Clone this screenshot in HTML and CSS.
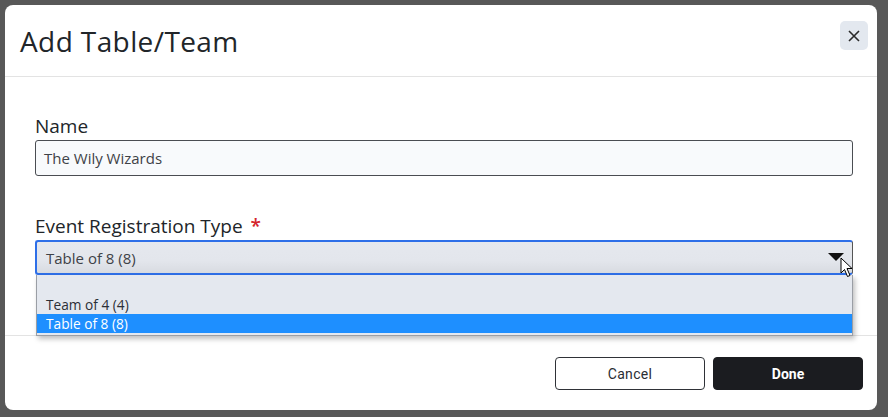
FILE: index.html
```html
<!DOCTYPE html>
<html>
<head>
<meta charset="utf-8">
<link rel="stylesheet" href="styles.css">
</head>
<body>
<div class="modal">
  <div class="modal-header">
    <h1 class="modal-title">Add Table/Team</h1>
    <button class="close-btn" aria-label="Close">
      <svg width="12" height="12" viewBox="0 0 12 12"><path d="M1 1L11 11M11 1L1 11" stroke="#2a2a2a" stroke-width="1.6" fill="none"/></svg>
    </button>
  </div>
  <div class="modal-body">
    <div class="field">
      <label class="label">Name</label>
      <div class="input">The Wily Wizards</div>
    </div>
    <div class="field field-select">
      <label class="label">Event Registration Type <span class="req">*</span></label>
      <div class="select">
        <span>Table of 8 (8)</span>
        <svg class="caret" width="16" height="8" viewBox="0 0 16 8"><path d="M0 0H16L8 8Z" fill="#111"/></svg>
      </div>
      <ul class="dropdown">
        <li class="opt opt-empty"></li>
        <li class="opt">Team of 4 (4)</li>
        <li class="opt opt-active">Table of 8 (8)</li>
      </ul>
      <svg class="cursor" width="14" height="21" viewBox="0 0 14 21"><path d="M1 1V16L4.5 12.5L7.5 19.5L10 18.5L7 11.5H12Z" fill="#fff" stroke="#000" stroke-width="1"/></svg>
    </div>
  </div>
  <div class="modal-footer">
    <button class="btn btn-cancel">Cancel</button>
    <button class="btn btn-done">Done</button>
  </div>
</div>
</body>
</html>
```

FILE: styles.css
```css
* { box-sizing: border-box; }
html, body { margin: 0; padding: 0; }
body {
  width: 888px;
  height: 417px;
  background: #585858;
  font-family: "Open Sans", "Noto Sans", sans-serif;
  overflow: hidden;
  padding: 5px 11px 7px 5px;
}
.modal {
  width: 872px;
  height: 405px;
  background: #fff;
  border-radius: 8px;
  display: flex;
  flex-direction: column;
}
.modal-header {
  height: 72px;
  border-bottom: 1px solid #e3e3e3;
  display: flex;
  align-items: flex-start;
  justify-content: space-between;
  padding: 16px 9px 0 15px;
  flex: none;
}
.modal-title {
  margin: 0;
  font-size: 28px;
  font-weight: 400;
  color: #212529;
  line-height: 40px;
  letter-spacing: 0.4px;
}
.close-btn {
  width: 28px;
  height: 29px;
  border: none;
  border-radius: 5px;
  background: #e3e8ef;
  display: flex;
  align-items: center;
  justify-content: center;
  padding: 0;
}
.modal-body {
  flex: 1;
  padding: 37px 24px 0 30px;
  border-bottom: 1px solid #e3e3e3;
}
.field { display: flex; flex-direction: column; }
.field-select { position: relative; margin-top: 38px; }
.label {
  font-size: 19px;
  font-weight: 500;
  color: #212529;
  line-height: 24px;
  margin-bottom: 2px;
}
.req { color: #d4242c; font-weight: 600; margin-left: 3px; }
.input {
  height: 36px;
  border: 1px solid #4a4d52;
  border-radius: 3px;
  background: #f8fafc;
  font-size: 15px;
  color: #3e4247;
  padding: 0 8px;
  line-height: 34px;
}
.select {
  height: 35px;
  border: 2px solid #2e6fe8;
  border-right: 1px solid #555;
  border-radius: 3px;
  background: linear-gradient(#e5e8ee 0%, #e3e6ec 60%, #d8dbe1 100%);
  font-size: 15px;
  color: #3e4247;
  padding: 0 8px 0 9px;
  display: flex;
  align-items: center;
  justify-content: space-between;
}
.caret { margin-top: -2px; }
.dropdown {
  position: absolute;
  left: 1px;
  right: 0;
  top: 61px;
  margin: 0;
  padding: 2px 0 2px;
  list-style: none;
  background: #e4e8ef;
  border: 1px solid #9a9ea5;
  border-top: none;
  box-shadow: 2px 3px 5px rgba(0,0,0,0.25);
  font-size: 13.7px;
  color: #2b2f36;
}
.opt { height: 19px; line-height: 19px; padding-left: 9px; }
.opt-empty { height: 18px; }
.opt-active { background: #1e8fff; color: #fff; }
.cursor { position: absolute; right: -1px; top: 43px; }
.modal-footer {
  height: 74px;
  flex: none;
  display: flex;
  justify-content: flex-end;
  align-items: flex-start;
  gap: 8px;
  padding: 21px 14px 0 0;
}
.btn {
  width: 150px;
  height: 33px;
  border-radius: 4px;
  font-family: Roboto, "Liberation Sans", sans-serif;
  font-size: 14px;
  cursor: pointer;
}
.btn-cancel {
  background: #fff;
  border: 1px solid #2f3237;
  color: #2a2d33;
  letter-spacing: 0.3px;
}
.btn-done {
  background: #1b1c20;
  border: 1px solid #1b1c20;
  color: #fff;
  font-weight: 700;
}
```
